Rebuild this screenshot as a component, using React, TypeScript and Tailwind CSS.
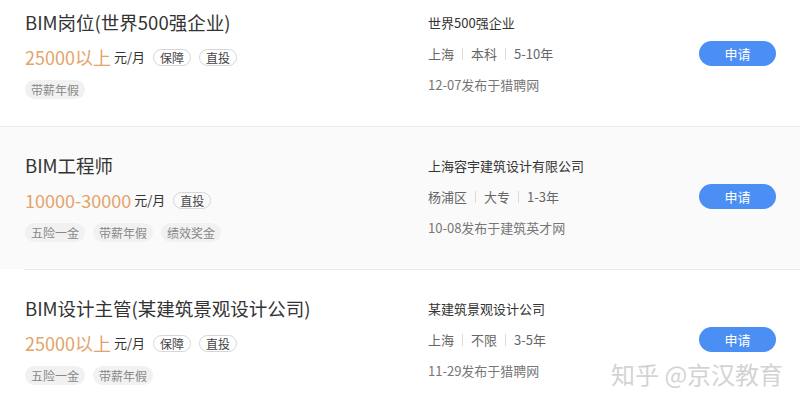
const jobs = [
  {
    title: 'BIM岗位(世界500强企业)',
    salary: '25000以上',
    badges: ['保障', '直投'],
    tags: ['带薪年假'],
    company: '世界500强企业',
    meta: ['上海', '本科', '5-10年'],
    date: '12-07发布于猎聘网',
    bg: 'bg-white',
  },
  {
    title: 'BIM工程师',
    salary: '10000-30000',
    badges: ['直投'],
    tags: ['五险一金', '带薪年假', '绩效奖金'],
    company: '上海容宇建筑设计有限公司',
    meta: ['杨浦区', '大专', '1-3年'],
    date: '10-08发布于建筑英才网',
    bg: 'bg-[#fafafa]',
  },
  {
    title: 'BIM设计主管(某建筑景观设计公司)',
    salary: '25000以上',
    badges: ['保障', '直投'],
    tags: ['五险一金', '带薪年假'],
    company: '某建筑景观设计公司',
    meta: ['上海', '不限', '3-5年'],
    date: '11-29发布于猎聘网',
    bg: 'bg-white',
  },
];

const App = () => {
  return (
    <div className="relative w-[800px] h-[407px] overflow-hidden bg-white font-['Noto_Sans_CJK_SC','Noto_Sans',sans-serif]">
      <div className="-mt-[16px]">
        {jobs.map((job, i) => (
          <div key={i}>
            {i > 0 && (
              <div className={i === 2 ? 'ml-[24px] h-px bg-[#ebebeb]' : 'h-px bg-[#ebebeb]'} />
            )}
            <div className={`${job.bg} h-[142px] flex pl-[25px] pr-[24px]`}>
              {/* Left: title / salary / tags */}
              <div className="w-[403px] flex flex-col">
                <div className="mt-[25px] h-[26px] leading-[26px] text-[18.5px] text-[#333]">{job.title}</div>
                <div className="mt-[10px] h-[24px] flex items-center">
                  <span className="text-[18px] leading-[24px] text-[#e3a469]">{job.salary}</span>
                  <span className="ml-[3px] text-[13px] text-[#333]">元/月</span>
                  {job.badges.map((b) => (
                    <span
                      key={b}
                      className="ml-[8px] h-[17px] px-[6px] leading-[15px] text-[12px] text-[#444] border border-[#d6d6d6] rounded-full"
                    >
                      {b}
                    </span>
                  ))}
                </div>
                <div className="mt-[11px] flex gap-[8px]">
                  {job.tags.map((t) => (
                    <span
                      key={t}
                      className="h-[19px] px-[6px] leading-[19px] text-[12px] text-[#888] bg-[#f1f1f1] rounded-full"
                    >
                      {t}
                    </span>
                  ))}
                </div>
              </div>
              {/* Right: company / meta / date */}
              <div className="flex-1 flex flex-col">
                <div className="mt-[29px] h-[20px] leading-[20px] text-[13px] text-[#333]">{job.company}</div>
                <div className="mt-[11px] h-[20px] flex items-center text-[13px] text-[#666]">
                  {job.meta.map((m, k) => (
                    <span key={k} className="flex items-center">
                      {k > 0 && <span className="mx-[8px] w-px h-[12px] bg-[#dcdcdc]" />}
                      {m}
                    </span>
                  ))}
                </div>
                <div className="mt-[11px] h-[20px] leading-[20px] text-[13px] text-[#777]">{job.date}</div>
              </div>
              <div className="flex items-start">
                <button className="mt-[57px] w-[77px] h-[25px] rounded-full bg-[#4b8ef4] text-white text-[13px] leading-[25px]">
                  申请
                </button>
              </div>
            </div>
          </div>
        ))}
      </div>
      <div className="absolute left-[611px] top-[358px] whitespace-nowrap text-[24px] leading-[32px] text-[#cfcfcf] opacity-90">
        知乎 @京汉教育
      </div>
    </div>
  );
};

export default App;
